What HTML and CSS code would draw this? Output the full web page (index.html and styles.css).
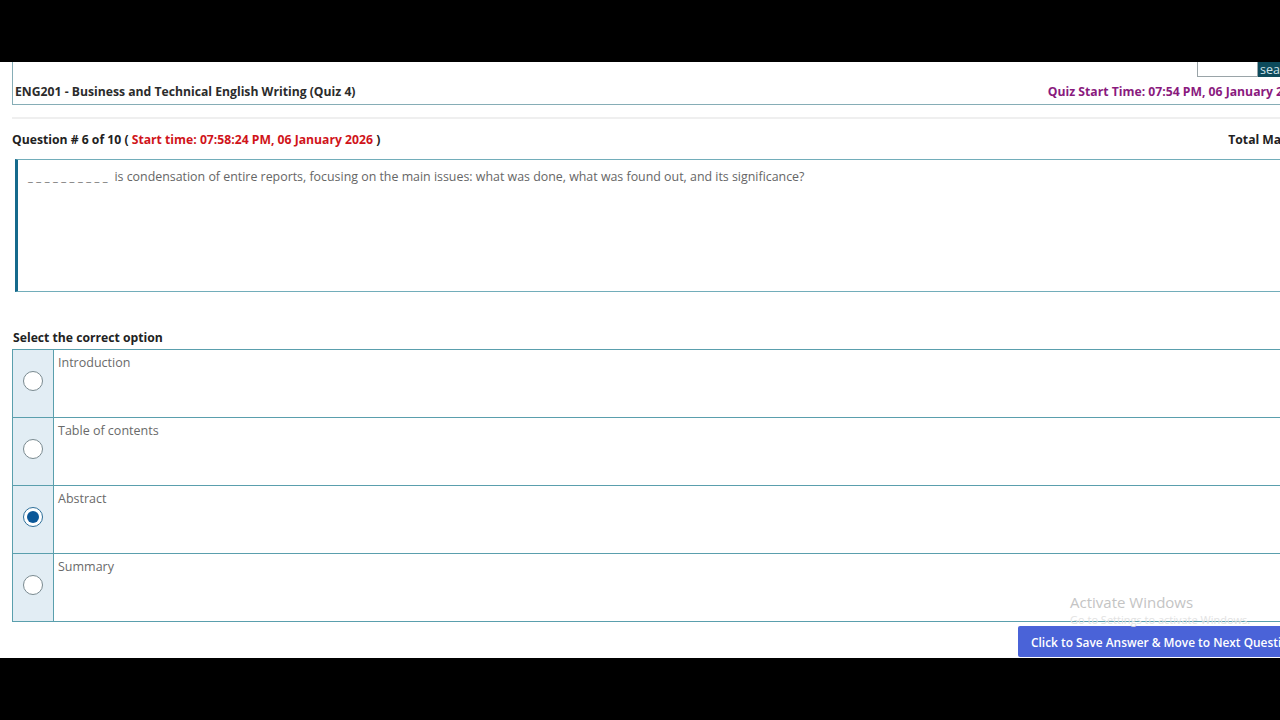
FILE: index.html
```html
<!DOCTYPE html>
<html>
<head>
<meta charset="utf-8">
<link rel="stylesheet" href="styles.css">
</head>
<body>
<div class="bar-top"></div>
<div class="screen">
  <div class="page">
    <header class="quiz-head">
      <div class="search-row">
        <input class="search-input" type="text">
        <button class="search-btn">search</button>
      </div>
      <div class="title-row">
        <span class="course">ENG201 - Business and Technical English Writing (Quiz 4)</span>
        <span class="quiz-start">Quiz Start Time: 07:54 PM, 06 January 2026</span>
      </div>
    </header>
    <div class="sep"></div>
    <div class="q-row">
      <span class="q-num">Question # 6 of 10 ( <span class="q-time">Start time: 07:58:24 PM, 06 January 2026</span> )</span>
      <span class="q-marks">Total Marks: 1</span>
    </div>
    <div class="q-box">
      <p class="q-text"><span class="blank">__________</span> is condensation of entire reports, focusing on the main issues: what was done, what was found out, and its significance?</p>
    </div>
    <div class="sel-label">Select the correct option</div>
    <div class="options">
      <div class="opt">
        <div class="opt-radio"><span class="radio"></span></div>
        <div class="opt-text">Introduction</div>
      </div>
      <div class="opt">
        <div class="opt-radio"><span class="radio"></span></div>
        <div class="opt-text">Table of contents</div>
      </div>
      <div class="opt">
        <div class="opt-radio"><span class="radio checked"></span></div>
        <div class="opt-text">Abstract</div>
      </div>
      <div class="opt">
        <div class="opt-radio"><span class="radio"></span></div>
        <div class="opt-text">Summary</div>
      </div>
    </div>
    <div class="actions">
      <button class="save-btn">Click to Save Answer &amp; Move to Next Question</button>
    </div>
  </div>
  <div class="watermark">
    <div class="wm-title">Activate Windows</div>
    <div class="wm-sub">Go to Settings to activate Windows.</div>
  </div>
</div>
<div class="bar-bottom"></div>
</body>
</html>
```
FILE: styles.css
```css
html, body {
  margin: 0;
  padding: 0;
  background: #000;
}
body {
  width: 1280px;
  height: 720px;
  overflow: hidden;
  font-family: "Open Sans", "Liberation Sans", sans-serif;
}
.bar-top {
  height: 62px;
  background: #000;
}
.bar-bottom {
  height: 62px;
  background: #000;
}
.screen {
  position: relative;
  height: 596px;
  background: #fff;
  overflow: hidden;
}
.page {
  width: 1318px;
  display: flex;
  flex-direction: column;
}
.quiz-head {
  margin-left: 12px;
  border-left: 1px solid #86adb6;
  border-bottom: 1px solid #86adb6;
  height: 42px;
  display: flex;
  flex-direction: column;
}
.search-row {
  display: flex;
  justify-content: flex-end;
  height: 15px;
}
.search-input {
  width: 61px;
  height: 15px;
  box-sizing: border-box;
  border: 1px solid #9aa4a8;
  border-top: none;
  margin: 0;
  padding: 0;
  background: #fff;
}
.search-btn {
  width: 60px;
  height: 15px;
  border: none;
  margin: 0;
  padding: 0 0 0 2px;
  background: #0d4a5b;
  color: #cfe3ea;
  font-family: "Open Sans", sans-serif;
  font-size: 12.5px;
  line-height: 10px;
  text-align: left;
  overflow: hidden;
  white-space: nowrap;
}
.title-row {
  flex: 1;
  display: flex;
  justify-content: space-between;
  align-items: center;
  padding-left: 2px;
  padding-right: 14px;
  padding-top: 2px;
}
.course {
  font-size: 12.2px;
  font-weight: 700;
  color: #2b2b2b;
}
.quiz-start {
  font-size: 12.2px;
  font-weight: 700;
  color: #8a1a7e;
}
.sep {
  margin-top: 12px;
  margin-left: 12px;
  height: 2px;
  background: #efefef;
}
.q-row {
  height: 40px;
  display: flex;
  justify-content: space-between;
  align-items: center;
  padding-left: 12px;
  padding-right: 4px;
}
.q-num {
  font-size: 12.2px;
  font-weight: 700;
  color: #222;
}
.q-time {
  color: #d0141a;
}
.q-marks {
  font-size: 12.2px;
  font-weight: 700;
  color: #222;
}
.q-box {
  margin-left: 15px;
  height: 131px;
  border: 1px solid #72adba;
  border-left: 3px solid #156a8c;
}
.q-text {
  margin: 0;
  padding: 8px 0 0 10px;
  font-size: 12.4px;
  color: #666;
}
.blank {
  font-size: 11px;
  letter-spacing: 3.5px;
}
.sel-label {
  margin-top: 39px;
  padding-left: 13px;
  font-size: 12.2px;
  font-weight: 700;
  color: #222;
  line-height: 14px;
}
.options {
  margin-top: 4px;
  margin-left: 12px;
  border: 1px solid #5a9fad;
  display: flex;
  flex-direction: column;
}
.opt {
  display: flex;
  height: 67px;
  border-top: 1px solid #5a9fad;
}
.opt:first-child {
  border-top: none;
}
.opt-radio {
  width: 41px;
  flex: none;
  background: #e2edf4;
  border-right: 1px solid #5a9fad;
  display: flex;
  justify-content: center;
  padding-top: 21px;
  box-sizing: border-box;
}
.radio {
  width: 20px;
  height: 20px;
  border-radius: 50%;
  border: 1px solid #7a8a90;
  background: #fff;
  display: flex;
  align-items: center;
  justify-content: center;
  box-sizing: border-box;
}
.radio.checked {
  border: 1.5px solid #2e6f99;
}
.radio.checked::after {
  content: "";
  width: 12px;
  height: 12px;
  border-radius: 50%;
  background: #0c5898;
}
.opt-text {
  padding: 4px 0 0 4px;
  font-size: 12.5px;
  color: #6a6a6a;
}
.actions {
  display: flex;
  justify-content: flex-end;
  margin-top: 4px;
}
.save-btn {
  width: 300px;
  height: 31px;
  border: none;
  border-radius: 2px;
  background: #4a63d8;
  color: #fff;
  font-family: "Open Sans", sans-serif;
  font-size: 11.9px;
  font-weight: 600;
  text-align: left;
  padding: 0 0 0 13px;
  white-space: nowrap;
}
.watermark {
  position: absolute;
  left: 1070px;
  top: 530px;
  color: #c4c4c4;
  font-family: "Open Sans", sans-serif;
}
.wm-title {
  font-size: 15px;
  line-height: 20px;
}
.wm-sub {
  font-size: 11px;
  line-height: 16px;
  color: #e2e2e2;
}
```
